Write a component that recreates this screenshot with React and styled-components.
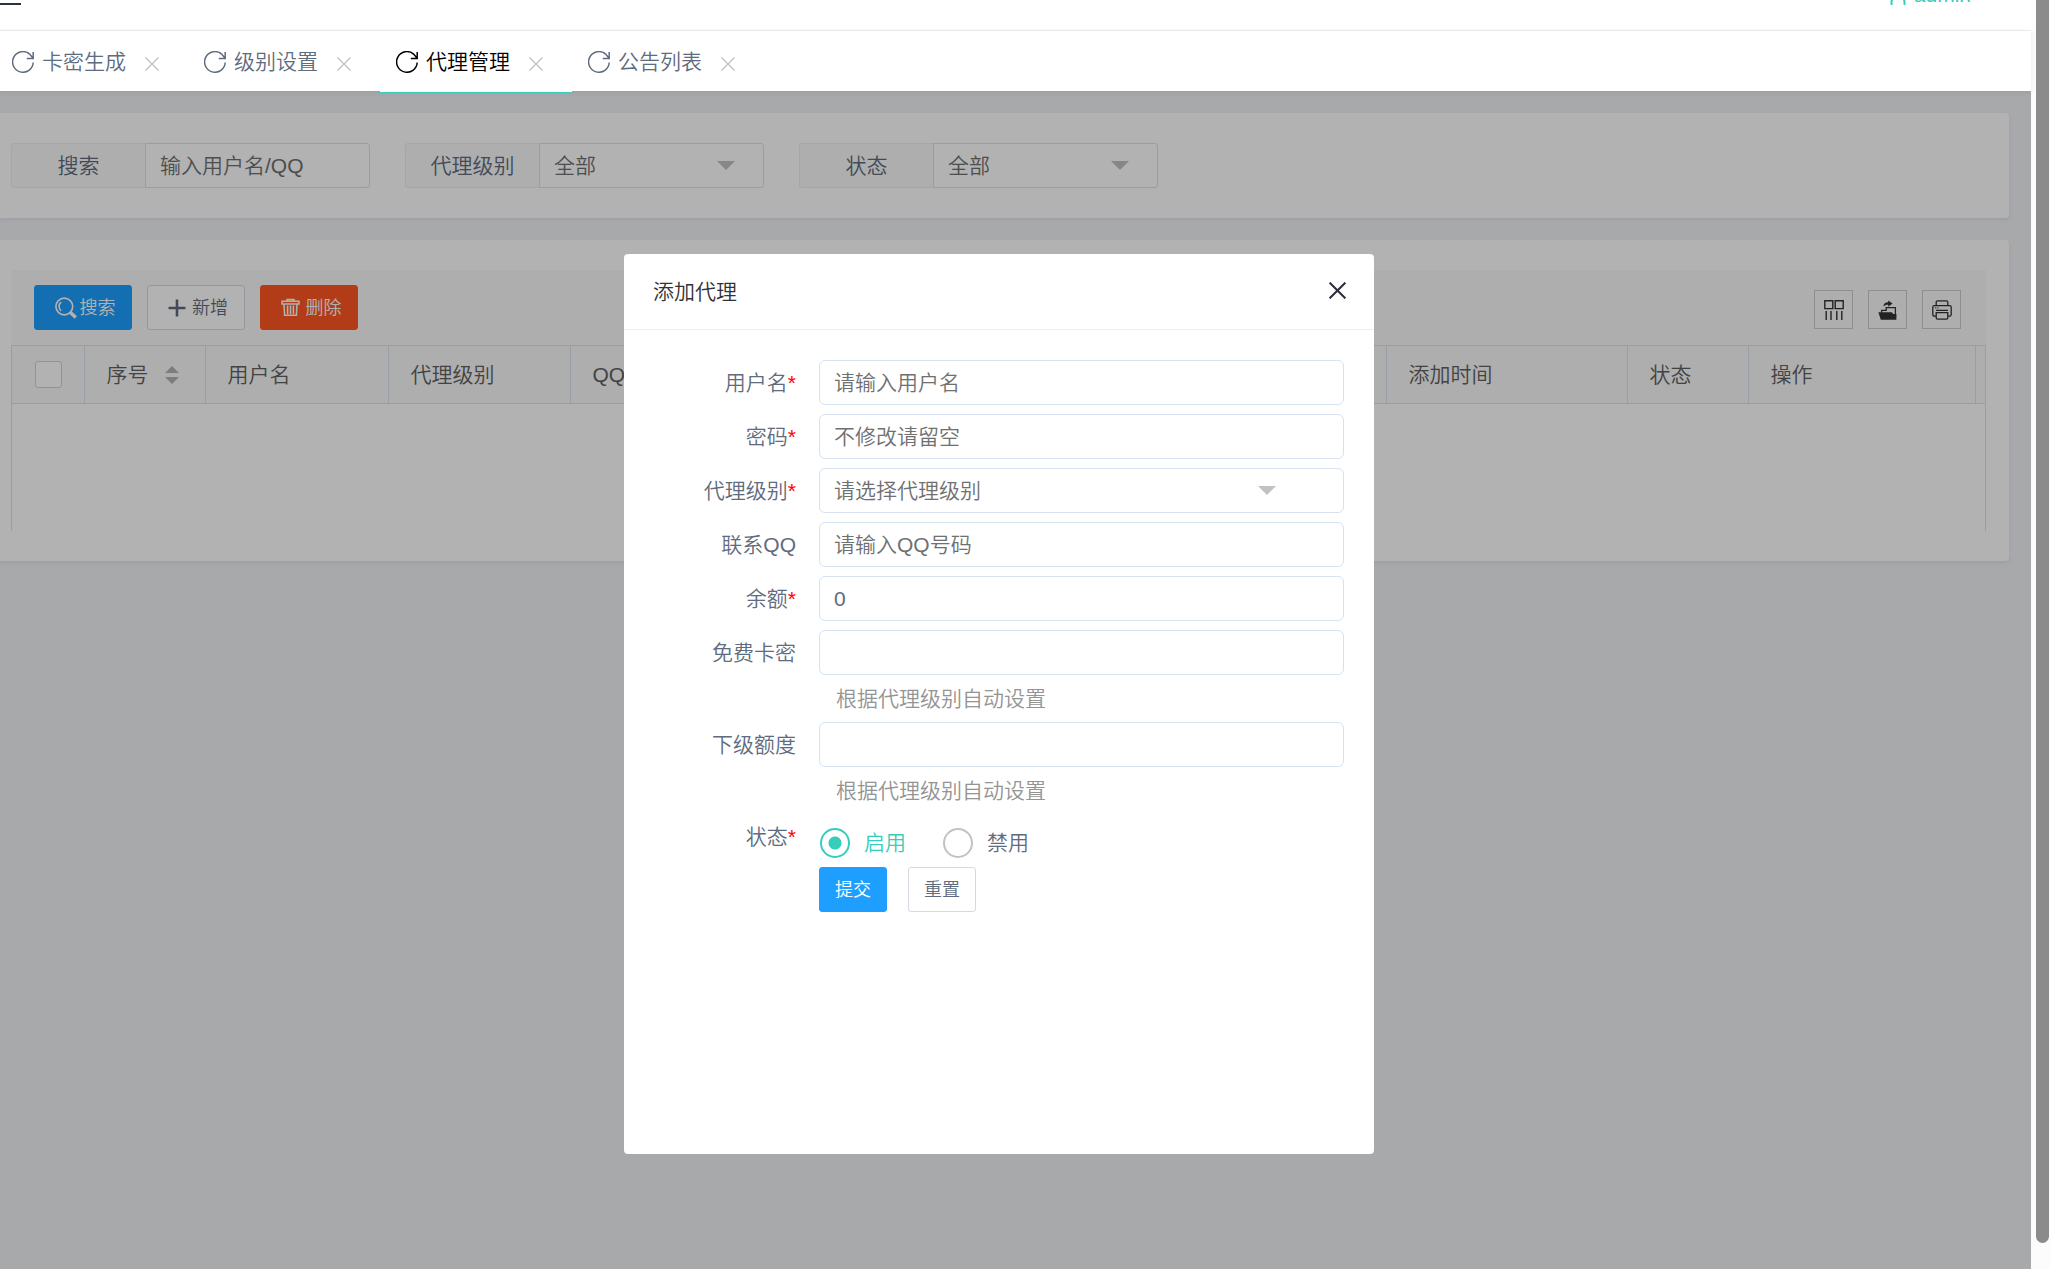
// src/App.jsx
import React, { useState } from "react"
import styled, { createGlobalStyle } from "styled-components"

const TABS = [
  { id: "card", title: "卡密生成" },
  { id: "level", title: "级别设置" },
  { id: "agent", title: "代理管理" },
  { id: "notice", title: "公告列表" },
]

// Icons
const RefreshIcon = () => (
  <Icon viewBox="0 0 22 22" size={22}>
    <path d="M21.2 11.5A10.3 10.3 0 1 1 17.6 3.1L21 7M21.2 1v6.4h-6.4" />
  </Icon>
)

const CrossIcon = ({ size, weight }) => (
  <Icon viewBox="0 0 14 14" size={size} weight={weight}>
    <path d="M.5.5l13 13M13.5.5l-13 13" />
  </Icon>
)

const SearchIcon = () => (
  <Icon viewBox="0 0 22 22" size={22} weight={1.6}>
    <circle cx="9.3" cy="9.5" r="8.4" />
    <path d="M6.2 5.2a5.4 5.4 0 0 0 0 8.6" />
    <path d="M15.4 15.6l5.4 5" strokeWidth="3.4" />
  </Icon>
)

const PlusIcon = () => (
  <Icon viewBox="0 0 18 18" size={18} weight={2.6}>
    <path d="M9 .5v17M.5 9h17" />
  </Icon>
)

const TrashIcon = () => (
  <Icon viewBox="0 0 19 18" size={19} weight={1.5}>
    <path d="M6 2.6V1h7v1.6M1 2.8h17v2.8H1zM3 5.8l.6 11h11.8l.6-11M6.6 7v8.4M9.5 7v8.4M12.4 7v8.4" />
  </Icon>
)

const ColumnsIcon = () => (
  <Icon viewBox="0 0 20 20" size={20} weight={1.4}>
    <path d="M.8.8H8.8v7.8H.8zM11.2.8h8v7.8h-8zM2.2 11v9M7 11v9M12.8 11v9M17.8 11v9" />
  </Icon>
)

const ExportIcon = () => (
  <Icon viewBox="0 0 20 20" size={20} weight={1.3}>
    <path d="M3.6 12.6v-2.2h4.6V7.6h9.2V18" />
    <path d="M5.4 6.4c.2-3 2-4.2 4.8-4.2V.4L14.6 3.6 10.2 6.8V4.8c-2-.2-3.2.4-4.8 1.6z" fill="currentColor" stroke="none" />
    <path d="M.4 12.2h13.4l1.6 1.8h3v5.8H2.8z" fill="currentColor" stroke="none" />
  </Icon>
)

const PrintIcon = () => (
  <Icon viewBox="0 0 20 20" size={20} weight={1.3}>
    <path d="M4.2 5.4V2.2Q4.2.8 5.6.8h8.8q1.4 0 1.4 1.4v3.2M4 16.2H2.4Q.8 16.2.8 14.6V7.2q0-1.6 1.6-1.6h15.2q1.6 0 1.6 1.6v7.4q0 1.6-1.6 1.6H16M4.2 12.6h11.6v5.2q0 1.4-1.4 1.4H5.6q-1.4 0-1.4-1.4zM4 10.4h12M3.2 7.8h1M5.4 7.8h1" />
  </Icon>
)

const UserIcon = () => (
  <Icon viewBox="0 0 18 20" size={20} weight={2}>
    <circle cx="9" cy="5" r="4" />
    <path d="M2.5 20v-3c0-3 3-6 6.500-6s6.500 3 6.500 6v3" />
  </Icon>
)

const Field = ({ id, label, required, hint, children }) => (
  <FormRow>
    <FormLabel htmlFor={id}>
      {label}
      {required && <Star>*</Star>}
    </FormLabel>
    <FormBody>
      {children}
      {hint && <Hint>{hint}</Hint>}
    </FormBody>
  </FormRow>
)

const AgentDialog = () => {
  const [status, setStatus] = useState("on")

  return (
    <Dialog role="dialog" aria-labelledby="dialog-title">
      <DialogHeader>
        <DialogTitle id="dialog-title">添加代理</DialogTitle>
        <DialogClose type="button" aria-label="关闭">
          <CrossIcon size={17} weight={1.7} />
        </DialogClose>
      </DialogHeader>
      <Form onSubmit={e => e.preventDefault()}>
        <Field id="username" label="用户名" required>
          <Input id="username" placeholder="请输入用户名" />
        </Field>
        <Field id="password" label="密码" required>
          <Input id="password" type="password" placeholder="不修改请留空" />
        </Field>
        <Field id="agent-level" label="代理级别" required>
          <SelectBox arrow={68}>
            <Select id="agent-level">
              <option>请选择代理级别</option>
            </Select>
          </SelectBox>
        </Field>
        <Field id="qq" label="联系QQ">
          <Input id="qq" placeholder="请输入QQ号码" />
        </Field>
        <Field id="balance" label="余额" required>
          <Input id="balance" defaultValue="0" />
        </Field>
        <Field id="free-card" label="免费卡密" hint="根据代理级别自动设置">
          <Input id="free-card" />
        </Field>
        <Field id="quota" label="下级额度" hint="根据代理级别自动设置">
          <Input id="quota" />
        </Field>
        <FormRow>
          <FormLabel as="span">
            状态<Star>*</Star>
          </FormLabel>
          <FormBody>
            <RadioGroup role="radiogroup" aria-label="状态">
              <RadioLabel checked={status === "on"}>
                <Radio name="status" checked={status === "on"} onChange={() => setStatus("on")} />
                启用
              </RadioLabel>
              <RadioLabel checked={status === "off"}>
                <Radio name="status" checked={status === "off"} onChange={() => setStatus("off")} />
                禁用
              </RadioLabel>
            </RadioGroup>
            <FormActions>
              <Button type="submit" tone="primary" compact>
                提交
              </Button>
              <Button type="reset" compact>
                重置
              </Button>
            </FormActions>
          </FormBody>
        </FormRow>
      </Form>
    </Dialog>
  )
}

const App = () => {
  const [activeTab, setActiveTab] = useState("agent")

  return (
    <Page>
      <GlobalStyle />
      <Screen>
        <Header>
          <MenuButton type="button" aria-label="菜单" />
          <Account href="#user">
            <UserIcon />
            admin
          </Account>
        </Header>

        <TabBar>
          {TABS.map(({ id, title }) => (
            <Tab key={id} active={id === activeTab}>
              <TabButton type="button" onClick={() => setActiveTab(id)}>
                <RefreshIcon />
                {title}
              </TabButton>
              <TabClose type="button" aria-label={`关闭${title}`}>
                <CrossIcon size={14} weight={1.4} />
              </TabClose>
            </Tab>
          ))}
        </TabBar>

        <Frame>
          <Card>
            <Filters>
              <Filter>
                <FilterLabel htmlFor="keyword">搜索</FilterLabel>
                <FilterInput id="keyword" placeholder="输入用户名/QQ" />
              </Filter>
              <Filter>
                <FilterLabel htmlFor="level">代理级别</FilterLabel>
                <SelectBox arrow={29}>
                  <FilterSelect id="level">
                    <option>全部</option>
                  </FilterSelect>
                </SelectBox>
              </Filter>
              <Filter>
                <FilterLabel htmlFor="status">状态</FilterLabel>
                <SelectBox arrow={29}>
                  <FilterSelect id="status">
                    <option>全部</option>
                  </FilterSelect>
                </SelectBox>
              </Filter>
            </Filters>
          </Card>

          <Card>
            <Toolbar>
              <Button type="button" tone="primary">
                <SearchIcon />
                搜索
              </Button>
              <Button type="button">
                <PlusIcon />
                新增
              </Button>
              <Button type="button" tone="danger">
                <TrashIcon />
                删除
              </Button>
              <Tools>
                <ToolButton type="button" aria-label="筛选列">
                  <ColumnsIcon />
                </ToolButton>
                <ToolButton type="button" aria-label="导出">
                  <ExportIcon />
                </ToolButton>
                <ToolButton type="button" aria-label="打印">
                  <PrintIcon />
                </ToolButton>
              </Tools>
            </Toolbar>
            <TableBox>
              <Table>
                <thead>
                  <tr>
                    <Th width={72}>
                      <Checkbox aria-label="全选" />
                    </Th>
                    <Th width={121}>
                      <Sortable>
                        序号
                        <SortIcon viewBox="0 0 14 18">
                          <path d="M7 0l7 7H0zM7 18l7-7H0z" />
                        </SortIcon>
                      </Sortable>
                    </Th>
                    <Th width={183}>用户名</Th>
                    <Th width={182}>代理级别</Th>
                    <Th>QQ</Th>
                    <Th width={241}>添加时间</Th>
                    <Th width={121}>状态</Th>
                    <Th width={227}>操作</Th>
                    <Th width={10} />
                  </tr>
                </thead>
              </Table>
            </TableBox>
          </Card>

          <Shade>
            <AgentDialog />
          </Shade>
        </Frame>
      </Screen>
      <ScrollTrack>
        <ScrollThumb />
      </ScrollTrack>
    </Page>
  )
}

// Styled Components
const GlobalStyle = createGlobalStyle`
  *, *::before, *::after {
    box-sizing: border-box;
  }
  body {
    margin: 0;
    font-family: "Liberation Sans", "Noto Sans CJK SC", sans-serif;
    font-size: 21px;
    font-weight: 350;
    line-height: 30px;
    color: #5f6b7e;
    background-color: #fcfcfc;
  }
  button, input, select {
    margin: 0;
    font: inherit;
    color: inherit;
  }
  button {
    cursor: pointer;
  }
`

const Icon = styled.svg.attrs({ "aria-hidden": true }).withConfig({
  shouldForwardProp: prop => !["size", "weight"].includes(prop),
})`
  flex: none;
  width: ${({ size }) => size}px;
  height: ${({ size }) => size}px;
  fill: none;
  stroke: currentColor;
  stroke-width: ${({ weight }) => weight || 1.5};
`

const Page = styled.div`
  display: flex;
  min-height: 100vh;
  overflow: hidden;
`

const Screen = styled.div`
  flex: 1;
  min-width: 0;
  display: flex;
  flex-direction: column;
`

const ScrollTrack = styled.div`
  flex: none;
  display: flex;
  width: 19px;
  padding: 0 1px 26px 5px;
`

const ScrollThumb = styled.div`
  flex: 1;
  border-radius: 0 0 7px 7px;
  background-color: #8b8b8b;
`

const Header = styled.header`
  display: flex;
  justify-content: space-between;
  align-items: center;
  height: 91px;
  margin-top: -60px;
  padding: 20px 60px 0 0;
  border-bottom: 1px solid #eeeeee;
  background-color: white;
`

const MenuButton = styled.button`
  width: 21px;
  height: 20px;
  padding: 0;
  border: solid #28333e;
  border-width: 2px 0;
  background: none;
`

const Account = styled.a`
  display: flex;
  align-items: center;
  gap: 6px;
  color: #36cdbb;
  text-decoration: none;
`

const TabBar = styled.nav`
  position: relative;
  z-index: 2;
  display: flex;
  height: 60px;
  margin-left: -4px;
  background-color: white;
  box-shadow: 0 1px 6px rgba(0, 0, 0, 0.08);
`

const Tab = styled.div.withConfig({ shouldForwardProp: prop => prop !== "active" })`
  display: flex;
  align-items: center;
  gap: 19px;
  height: 62px;
  padding: 0 29px 0 16px;
  color: ${({ active }) => (active ? "#000000" : "inherit")};
  border-bottom: 1px solid ${({ active }) => (active ? "#36cdbb" : "transparent")};
  background-color: ${({ active }) => (active ? "white" : "transparent")};
`

const TabButton = styled.button`
  display: flex;
  align-items: center;
  gap: 8px;
  padding: 0;
  border: none;
  background: none;
`

const TabClose = styled.button`
  display: flex;
  padding: 4px 0 0;
  border: none;
  background: none;
  color: #c2c2c2;
`

const Frame = styled.main`
  position: relative;
  flex: 1;
  display: flex;
  flex-direction: column;
  gap: 22px;
  padding: 22px 22px 22px 0;
  background-color: #f0f2f5;
`

const Card = styled.section`
  padding: 30px 23px 30px 11px;
  border-radius: 0 4px 4px 0;
  background-color: white;
  box-shadow: 0 2px 4px rgba(120, 130, 160, 0.12);
`

const Filters = styled.form`
  display: flex;
  gap: 35px;
`

const Filter = styled.div`
  display: flex;
  width: 359px;
`

const FilterLabel = styled.label`
  flex: none;
  width: 134px;
  height: 45px;
  line-height: 43px;
  text-align: center;
  border: 1px solid #eeeeee;
  border-right: none;
  border-radius: 3px 0 0 3px;
  background-color: #fafafa;
`

const Input = styled.input`
  width: 100%;
  min-width: 0;
  height: 45px;
  padding: 0 14px;
  border: 1px solid #d6e2f0;
  border-radius: 6px;
  background-color: white;

  &::placeholder {
    color: #707070;
    opacity: 1;
  }
`

const FilterInput = styled(Input)`
  border-radius: 0 3px 3px 0;
`

const SelectBox = styled.div.withConfig({ shouldForwardProp: prop => prop !== "arrow" })`
  position: relative;
  flex: 1;

  &::after {
    content: "";
    position: absolute;
    top: 18px;
    right: ${({ arrow }) => arrow}px;
    border: 9px solid transparent;
    border-top-color: #c2c2c2;
    border-bottom: none;
    pointer-events: none;
  }
`

const Select = styled.select`
  display: block;
  appearance: none;
  width: 100%;
  height: 45px;
  padding: 0 14px;
  color: #707070;
  border: 1px solid #d6e2f0;
  border-radius: 6px;
  background-color: white;
`

const FilterSelect = styled(Select)`
  border-radius: 0 3px 3px 0;
`

const Toolbar = styled.div`
  display: flex;
  gap: 15px;
  padding: 15px 25px 15px 23px;
  background-color: #fafafa;
`

const TONES = {
  primary: { background: "#1e9fff", border: "#1e9fff", color: "white" },
  danger: { background: "#ff5722", border: "#ff5722", color: "white" },
  plain: { background: "white", border: "#d5d9e2", color: "inherit" },
}

const Button = styled.button.withConfig({
  shouldForwardProp: prop => !["tone", "compact"].includes(prop),
})`
  display: flex;
  align-items: center;
  justify-content: center;
  gap: ${({ tone }) => (tone === "primary" ? 3 : 6)}px;
  width: ${({ compact }) => (compact ? 68 : 98)}px;
  height: 45px;
  padding: ${({ compact }) => (compact ? "0" : "0 0 0 4px")};
  font-size: 18px;
  color: ${({ tone = "plain" }) => TONES[tone].color};
  border: 1px solid ${({ tone = "plain" }) => TONES[tone].border};
  border-radius: 3px;
  background-color: ${({ tone = "plain" }) => TONES[tone].background};
`

const Tools = styled.div`
  display: flex;
  gap: 15px;
  margin-left: auto;
  padding-top: 5px;
`

const ToolButton = styled.button`
  display: flex;
  align-items: center;
  justify-content: center;
  width: 39px;
  height: 39px;
  padding: 0;
  color: #333333;
  border: 1px solid #cccccc;
  background: none;
`

const TableBox = styled.div`
  min-height: 186px;
  border: solid #d8e2f1;
  border-width: 0 1px;
`

const Table = styled.table`
  width: 100%;
  table-layout: fixed;
  border-collapse: collapse;
`

const Th = styled.th`
  width: ${({ width }) => (width ? `${width}px` : "auto")};
  height: 58px;
  padding: 0 0 0 22px;
  font-weight: inherit;
  text-align: left;
  color: #606060;
  border: 1px solid #d8e2f1;
  border-left: none;
  background-color: #fafafa;

  &:first-child {
    padding-left: 23px;
  }

  &:last-child {
    padding: 0;
    border-right: none;
  }
`

const Checkbox = styled.input.attrs({ type: "checkbox" })`
  display: block;
  appearance: none;
  width: 27px;
  height: 27px;
  border: 1px solid #d2d2d2;
  border-radius: 3px;
  background-color: white;
`

const Sortable = styled.span`
  display: flex;
  align-items: center;
  gap: 16px;
`

const SortIcon = styled.svg`
  width: 14px;
  height: 18px;
  fill: #b2b2b2;
`

const Shade = styled.div`
  position: absolute;
  inset: 0;
  z-index: 1;
  display: flex;
  justify-content: center;
  align-items: flex-start;
  padding: 163px 33px 0 0;
  background-color: rgba(0, 0, 0, 0.3);
`

const Dialog = styled.section`
  width: 750px;
  min-height: 900px;
  border-radius: 4px;
  background-color: white;
`

const DialogHeader = styled.header`
  display: flex;
  justify-content: space-between;
  align-items: center;
  height: 76px;
  padding: 0 28px 0 29px;
  border-bottom: 1px solid #eeeeee;
`

const DialogTitle = styled.h2`
  margin: 0;
  font-size: 21px;
  font-weight: inherit;
  color: #333333;
`

const DialogClose = styled.button`
  display: flex;
  padding: 0 0 2px;
  color: #2e2d3c;
  border: none;
  background: none;
`

const Form = styled.form`
  display: flex;
  flex-direction: column;
  gap: 9px;
  padding: 30px 30px 0 0;
`

const FormRow = styled.div`
  display: flex;
`

const FormLabel = styled.label`
  flex: none;
  width: 195px;
  height: 45px;
  padding-right: 23px;
  line-height: 45px;
  text-align: right;
`

const Star = styled.span`
  color: red;
`

const FormBody = styled.div`
  flex: 1;
`

const Hint = styled.p`
  height: 38px;
  margin: 0;
  padding-left: 17px;
  line-height: 48px;
  color: #949494;
`

const RadioGroup = styled.div`
  display: flex;
  gap: 36px;
  padding-top: 14px;
`

const RadioLabel = styled.label.withConfig({ shouldForwardProp: prop => prop !== "checked" })`
  display: flex;
  align-items: center;
  gap: 14px;
  padding-left: 1px;
  line-height: 30px;
  color: ${({ checked }) => (checked ? "#36cdbb" : "inherit")};
`

const Radio = styled.input.attrs({ type: "radio" })`
  appearance: none;
  width: 30px;
  height: 30px;
  border: 2px solid #c2c2c2;
  border-radius: 50%;

  &:checked {
    border-color: #36cdbb;
    background: radial-gradient(circle, #36cdbb 6px, transparent 7px);
  }
`

const FormActions = styled.div`
  display: flex;
  gap: 21px;
  padding-top: 9px;
`

export default App
